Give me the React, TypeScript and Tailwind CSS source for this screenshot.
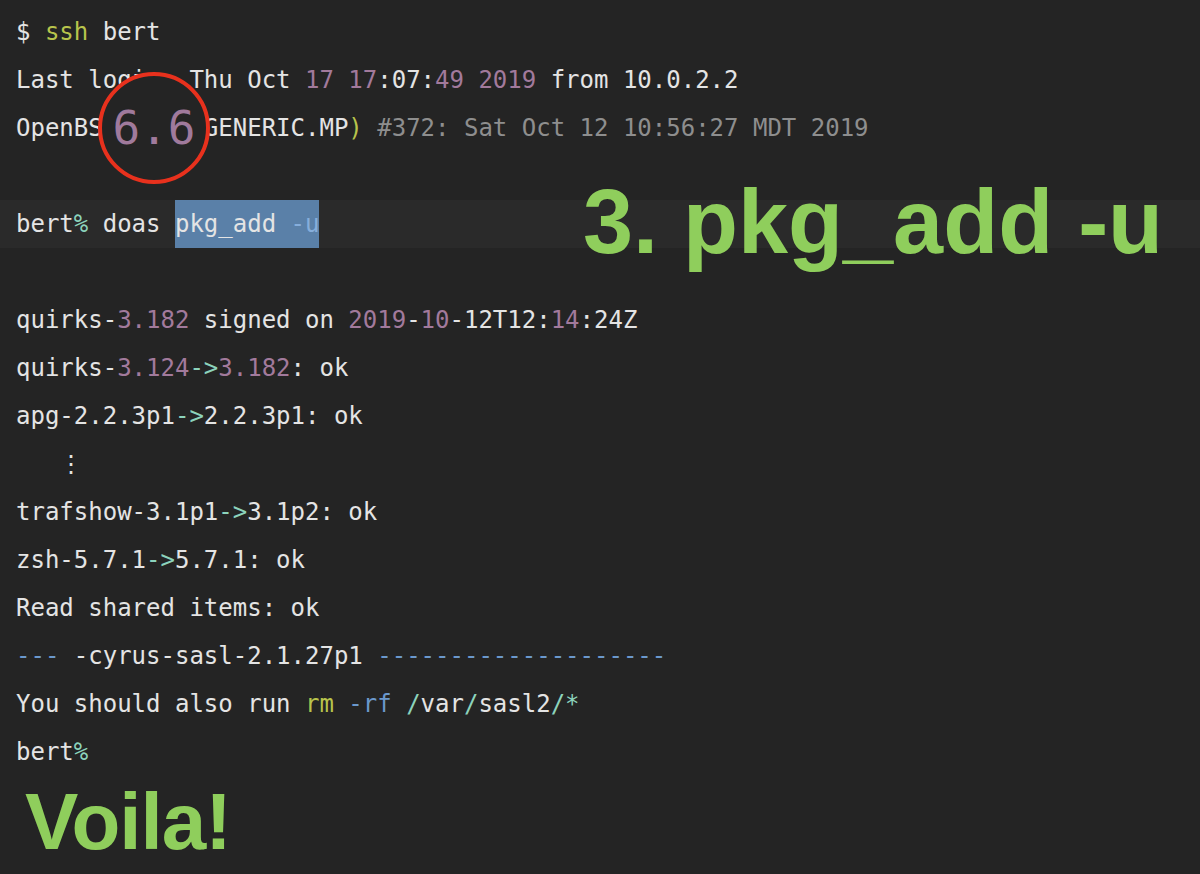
const mono = "font-['DejaVu_Sans_Mono','Liberation_Mono',monospace]";

const W = 'text-[#e4e4e4]';
const P = 'text-[#a27a9c]';
const T = 'text-[#8cd3bc]';
const B = 'text-[#6b98cc]';
const Y = 'text-[#b8c44c]';
const G = 'text-[#8e8e8e]';

function Line({ children, className = '' }: { children?: React.ReactNode; className?: string }) {
  return <div className={`h-12 leading-[48px] px-4 whitespace-pre ${className}`}>{children}</div>;
}

export default function App() {
  return (
    <div className={`relative w-[1200px] h-[874px] overflow-hidden bg-[#242424] ${mono} text-[24px] ${W}`}>
      <div className="pt-2">
        <Line>
          $ <span className={Y}>ssh</span> bert
        </Line>
        <Line>
          Last login: Thu Oct <span className={P}>17</span> <span className={P}>17</span>:07:
          <span className={P}>49</span> <span className={P}>2019</span> from 10.0.2.2
        </Line>
        <Line>
          OpenBSD 6.6 (GENERIC.MP<span className={Y}>)</span> <span className={G}>#372: Sat Oct 12 10:56:27 MDT 2019</span>
        </Line>
        <Line />
        <div className="h-12 leading-[48px] pl-4 bg-[#2a2a2a] whitespace-pre">
          bert<span className={T}>%</span> doas <span className="bg-[#5a80a8] inline-block h-12">pkg_add <span className="text-[#86aedb]">-u</span></span>
        </div>
        <Line />
        <Line>
          quirks-<span className={P}>3.182</span> signed on <span className={P}>2019</span>-<span className={P}>10</span>-12T12:<span className={P}>14</span>:24Z
        </Line>
        <Line>
          quirks-<span className={P}>3.124</span>
          <span className={T}>-&gt;</span>
          <span className={P}>3.182</span>: ok
        </Line>
        <Line>
          apg-2.2.3p1<span className={T}>-&gt;</span>2.2.3p1: ok
        </Line>
        <Line>{'   ⋮'}</Line>
        <Line>
          trafshow-3.1p1<span className={T}>-&gt;</span>3.1p2: ok
        </Line>
        <Line>
          zsh-5.7.1<span className={T}>-&gt;</span>5.7.1: ok
        </Line>
        <Line>Read shared items: ok</Line>
        <Line>
          <span className={B}>---</span> -cyrus-sasl-2.1.27p1 <span className={B}>--------------------</span>
        </Line>
        <Line>
          You should also run <span className={Y}>rm</span> <span className={B}>-rf</span>{' '}
          <span className={T}>/</span>var<span className={T}>/</span>sasl2<span className={T}>/*</span>
        </Line>
        <Line>
          bert<span className={T}>%</span>
        </Line>
        <div className="mt-[6px] pl-[25px] font-['Liberation_Sans',Arial,sans-serif] font-bold text-[80px] leading-none tracking-[-1px] text-[#8fce5c]">
          Voila!
        </div>
      </div>

      {/* annotation: version circle */}
      <div className="absolute left-[98px] top-[72px] w-[112px] h-[112px] rounded-full border-4 border-[#e8311d] bg-[#242424] flex items-center justify-center">
        <span className="text-[46px] leading-none text-[#a07a9c]">6.6</span>
      </div>

      {/* annotation: step title */}
      <div className="absolute left-[583px] top-[177px] font-['Liberation_Sans',Arial,sans-serif] font-bold text-[90px] leading-none text-[#8fce5c] whitespace-nowrap">
        3. pkg_add -u
      </div>
    </div>
  );
}
